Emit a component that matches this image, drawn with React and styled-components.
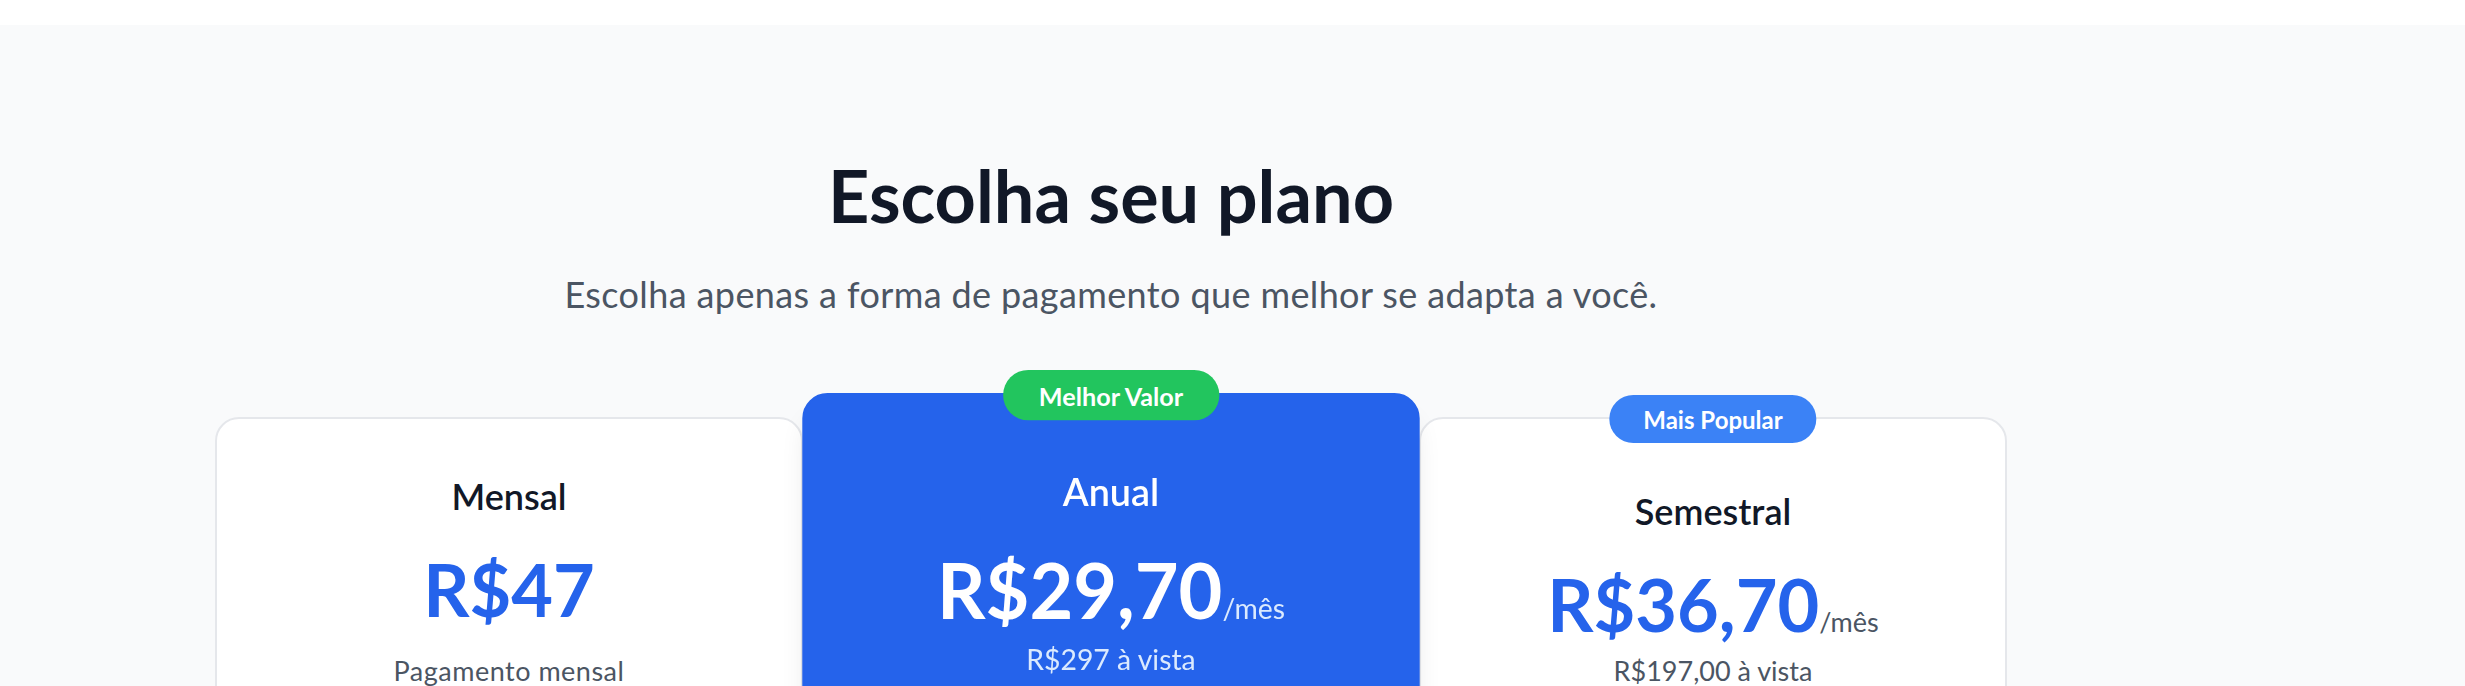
import styled, { createGlobalStyle } from 'styled-components';

const GlobalStyle = createGlobalStyle`
  html, body {
    margin: 0;
    padding: 0;
    overflow: hidden;
    background: #f9fafb;
  }
  body {
    font-family: Lato, "Open Sans", sans-serif;
  }
`;

const TopBar = styled.header`
  height: 25px;
  background: #ffffff;
`;

const Section = styled.section`
  background: #f9fafb;
  padding-top: 134px;
`;

const Inner = styled.div`
  width: 2222px;
  display: flex;
  flex-direction: column;
  align-items: center;
`;

const Title = styled.h2`
  margin: 0;
  font-size: 72px;
  line-height: 72px;
  font-weight: 700;
  color: #111827;
`;

const Subtitle = styled.p`
  margin: 39px 0 0;
  font-size: 36px;
  line-height: 48px;
  letter-spacing: 0.38px;
  color: #4b5563;
`;

const Grid = styled.div`
  margin-top: 99px;
  display: grid;
  grid-template-columns: repeat(3, 588px);
  column-gap: 14px;
  align-items: start;
`;

const Card = styled.div`
  position: relative;
  box-sizing: border-box;
  min-height: 960px;
  border-radius: 24px;
  border: 2px solid ${(p) => (p.$featured ? '#2563eb' : '#e5e7eb')};
  background: ${(p) => (p.$featured ? '#2563eb' : '#ffffff')};
  padding-top: ${(p) => (p.$hasBadge ? 68 : 53)}px;
  text-align: center;
  transform: ${(p) => (p.$featured ? 'scale(1.05)' : 'none')};
  z-index: ${(p) => (p.$featured ? 1 : 0)};
  box-shadow: ${(p) =>
    p.$featured ? '0 20px 25px -5px rgba(0,0,0,0.1), 0 8px 10px -6px rgba(0,0,0,0.1)' : 'none'};
`;

const Badge = styled.span`
  position: absolute;
  top: 0;
  left: 50%;
  transform: translate(-50%, -50%);
  height: 48px;
  padding: 0 34px;
  display: flex;
  align-items: center;
  border-radius: 999px;
  background: ${(p) => p.$color};
  color: #ffffff;
  font-size: 24px;
  font-weight: 700;
  white-space: nowrap;
`;

const PlanName = styled.h3`
  margin: 0;
  font-size: 36px;
  line-height: 48px;
  font-weight: 600;
  color: ${(p) => (p.$featured ? '#ffffff' : '#111827')};
`;

const PriceRow = styled.div`
  margin-top: 33px;
  height: 72px;
  display: flex;
  justify-content: center;
  align-items: baseline;
`;

const Price = styled.span`
  font-size: 72px;
  line-height: 72px;
  font-weight: 700;
  color: ${(p) => (p.$featured ? '#ffffff' : '#2563eb')};
`;

const Per = styled.span`
  font-size: 27px;
  line-height: 1;
  color: ${(p) => (p.$featured ? '#dbeafe' : '#4b5563')};
`;

const Note = styled.p`
  margin: ${(p) => p.$gap}px 0 0;
  font-size: 27px;
  line-height: 40px;
  letter-spacing: ${(p) => p.$spacing}px;
  color: ${(p) => (p.$featured ? '#dbeafe' : '#4b5563')};
`;

const plans = [
  { name: 'Mensal', price: 'R$47', note: 'Pagamento mensal', spacing: 0.5 },
  {
    name: 'Anual',
    price: 'R$29,70',
    per: '/mês',
    note: 'R$297 à vista',
    featured: true,
    badge: 'Melhor Valor',
    badgeColor: '#22c55e',
  },
  {
    name: 'Semestral',
    price: 'R$36,70',
    per: '/mês',
    note: 'R$197,00 à vista',
    badge: 'Mais Popular',
    badgeColor: '#3b82f6',
  },
];

function PlanCard({ plan }) {
  const { name, price, per, note, featured, badge, badgeColor, spacing = 0 } = plan;
  return (
    <Card $featured={featured} $hasBadge={!!badge}>
      {badge && <Badge $color={badgeColor}>{badge}</Badge>}
      <PlanName $featured={featured}>{name}</PlanName>
      <PriceRow>
        <Price $featured={featured}>{price}</Price>
        {per && <Per $featured={featured}>{per}</Per>}
      </PriceRow>
      <Note $featured={featured} $gap={badge ? 11 : 26} $spacing={spacing}>
        {note}
      </Note>
    </Card>
  );
}

export default function App() {
  return (
    <>
      <GlobalStyle />
      <TopBar />
      <Section>
        <Inner>
          <Title>Escolha seu plano</Title>
          <Subtitle>Escolha apenas a forma de pagamento que melhor se adapta a você.</Subtitle>
          <Grid>
            {plans.map((plan) => (
              <PlanCard key={plan.name} plan={plan} />
            ))}
          </Grid>
        </Inner>
      </Section>
    </>
  );
}
